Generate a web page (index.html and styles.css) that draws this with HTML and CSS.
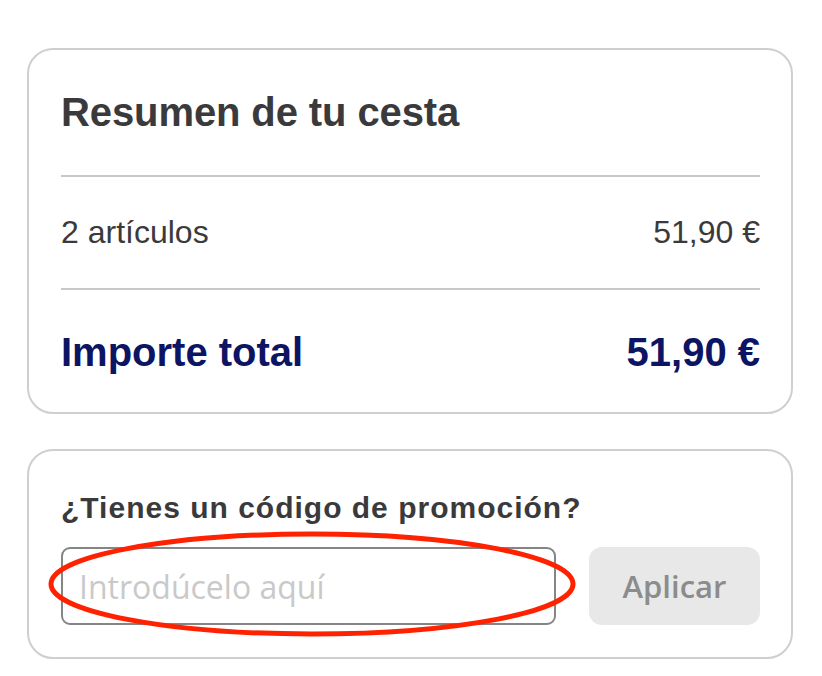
FILE: index.html
```html
<!DOCTYPE html>
<html lang="es">
<head>
<meta charset="utf-8">
<link rel="stylesheet" href="styles.css">
</head>
<body>
<div class="page">
  <section class="card summary">
    <h2 class="title">Resumen de tu cesta</h2>
    <div class="divider"></div>
    <div class="row items"><span>2 artículos</span><span>51,90 €</span></div>
    <div class="divider"></div>
    <div class="row total"><span>Importe total</span><span>51,90 €</span></div>
  </section>
  <section class="card promo">
    <h3 class="promo-title">¿Tienes un código de promoción?</h3>
    <div class="promo-form">
      <div class="input-wrap">
        <input class="promo-input" type="text" placeholder="Introdúcelo aquí">
        <svg class="annotation" width="540" height="112" viewBox="0 0 540 112"><ellipse cx="270" cy="56" rx="261" ry="50" fill="none" stroke="#ff2200" stroke-width="5"/></svg>
      </div>
      <button class="apply">Aplicar</button>
    </div>
  </section>
</div>
</body>
</html>
```
FILE: styles.css
```css
* { box-sizing: border-box; }
html, body { margin: 0; padding: 0; background: #fff; }
body { font-family: "Liberation Sans", Arial, sans-serif; color: #3a3a3c; }
.page { padding: 48px 29px 0 27px; display: flex; flex-direction: column; gap: 35px; width: 822px; }
.card { border: 2px solid #cfcfcf; border-radius: 26px; background: #fff; }
.summary { padding: 36px 31px 0 32px; height: 366px; }
.title { margin: 0; font-size: 40px; line-height: 52px; font-weight: 700; letter-spacing: -0.1px; color: #3a3a3c; }
.divider { height: 2px; background: #c8c8c8; }
.summary .divider:first-of-type { margin-top: 37px; }
.row { display: flex; justify-content: space-between; align-items: baseline; }
.items { font-size: 32px; line-height: 40px; margin: 35px 0 36px; color: #3a3a3c; }
.total { font-size: 40px; line-height: 48px; font-weight: 700; color: #0c1464; margin-top: 38px; }
.promo { padding: 39px 31px 0 32px; height: 210px; }
.promo-title { margin: 0; font-size: 30px; line-height: 36px; font-weight: 700; letter-spacing: 1px; color: #3a3a3c; }
.promo-form { display: flex; gap: 33px; margin-top: 21px; }
.input-wrap { position: relative; flex: 0 0 495px; }
.promo-input { width: 100%; height: 78px; border: 2px solid #858585; border-radius: 9px; padding: 0 16px; font-family: "Open Sans", sans-serif; font-size: 32px; color: #3a3a3c; background: #fff; outline: none; }
.promo-input::placeholder { color: #c9c9c9; }
.annotation { position: absolute; left: -19px; top: -19px; pointer-events: none; }
.apply { flex: 1; height: 78px; border: none; border-radius: 13px; background: #e8e8e8; color: #8c8c8c; font-family: "Open Sans", sans-serif; font-weight: 600; font-size: 31px; }
```
